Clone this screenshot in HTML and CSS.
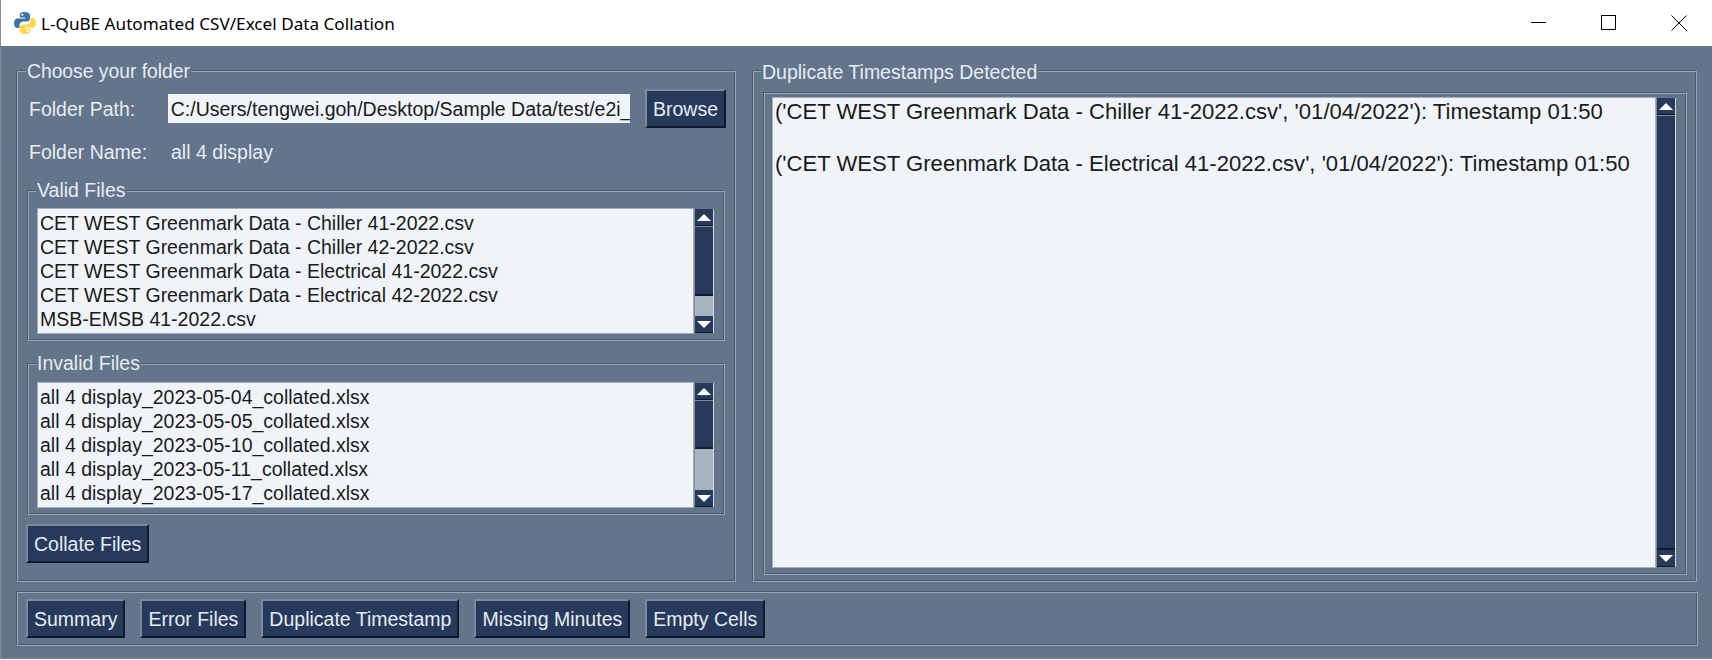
FILE: index.html
```html
<!DOCTYPE html>
<html lang="en">
<head>
  <meta charset="UTF-8" />
  <title>L-QuBE Automated CSV/Excel Data Collation</title>
  <link rel="stylesheet" href="styles.css">
</head>
<body>

  <div class="titlebar">
    <svg class="app-icon" viewBox="0 0 24 24" width="24" height="24">
      <path fill="#3a74a8" d="M11.5 1C7.5 1 6.800 2.600 6.800 4.200V6.500H12V7.500H4.500C2.300 7.500 1 9.300 1 12.200C1 15.200 2.200 17 4.300 17H6.500V14.200C6.500 12 8.200 10.500 10.200 10.500H14.200C15.800 10.500 17 9.200 17 7.600V4.200C17 2.400 15.300 1 11.500 1Z"/>
      <path fill="#ffd84a" d="M12.500 23C16.500 23 17.200 21.400 17.200 19.800V17.500H12V16.500H19.500C21.700 16.500 23 14.700 23 11.800C23 8.800 21.800 7 19.700 7H17.500V9.800C17.500 12 15.800 13.500 13.800 13.500H9.800C8.200 13.500 7 14.800 7 16.400V19.800C7 21.600 8.700 23 12.500 23Z"/>
      <circle cx="9.300" cy="3.800" r="1.100" fill="#fff"/>
      <circle cx="14.700" cy="20.200" r="1.100" fill="#fff"/>
    </svg>
    <span class="app-title">L-QuBE Automated CSV/Excel Data Collation</span>
    <div class="window-controls">
      <svg viewBox="0 0 16 16" width="16" height="16"><path d="M0 7.500H15" stroke="#000" fill="none"/></svg>
      <svg viewBox="0 0 16 16" width="16" height="16"><rect x="0.500" y="0.500" width="14" height="14" stroke="#000" fill="none"/></svg>
      <svg viewBox="0 0 16 16" width="16" height="16"><path d="M0.500 0.500L15.500 15.500M15.500 0.500L0.500 15.500" stroke="#000" fill="none"/></svg>
    </div>
  </div>

  <div class="main">
    <div class="top">
      <section class="group left-group">
        <span class="legend">Choose your folder</span>

        <div class="path-row">
          <span class="field-label">Folder Path:</span>
          <div class="entry">C:/Users/tengwei.goh/Desktop/Sample Data/test/e2i_</div>
          <button class="btn">Browse</button>
        </div>
        <div class="name-row">
          <span class="field-label">Folder Name:</span>
          <span>all 4 display</span>
        </div>

        <section class="group list-group valid">
          <span class="legend">Valid Files</span>
          <div class="list-wrap">
            <div class="listbox">
              <div>CET WEST Greenmark Data - Chiller 41-2022.csv</div>
              <div>CET WEST Greenmark Data - Chiller 42-2022.csv</div>
              <div>CET WEST Greenmark Data - Electrical 41-2022.csv</div>
              <div>CET WEST Greenmark Data - Electrical 42-2022.csv</div>
              <div>MSB-EMSB 41-2022.csv</div>
            </div>
            <div class="scrollbar">
              <div class="arrow up"></div>
              <div class="thumb" style="height: 70px"></div>
              <div class="track"></div>
              <div class="arrow down"></div>
            </div>
          </div>
        </section>

        <section class="group list-group invalid">
          <span class="legend">Invalid Files</span>
          <div class="list-wrap">
            <div class="listbox">
              <div>all 4 display_2023-05-04_collated.xlsx</div>
              <div>all 4 display_2023-05-05_collated.xlsx</div>
              <div>all 4 display_2023-05-10_collated.xlsx</div>
              <div>all 4 display_2023-05-11_collated.xlsx</div>
              <div>all 4 display_2023-05-17_collated.xlsx</div>
            </div>
            <div class="scrollbar">
              <div class="arrow up"></div>
              <div class="thumb" style="height: 49px"></div>
              <div class="track"></div>
              <div class="arrow down"></div>
            </div>
          </div>
        </section>

        <button class="btn collate">Collate Files</button>
      </section>

      <section class="group right-group">
        <span class="legend">Duplicate Timestamps Detected</span>
        <div class="result-frame">
          <div class="result-text">
            <p>('CET WEST Greenmark Data - Chiller 41-2022.csv', '01/04/2022'): Timestamp 01:50</p>
            <p>('CET WEST Greenmark Data - Electrical 41-2022.csv', '01/04/2022'): Timestamp 01:50</p>
          </div>
          <div class="scrollbar">
            <div class="arrow up"></div>
            <div class="thumb fill"></div>
            <div class="arrow down"></div>
          </div>
        </div>
      </section>
    </div>

    <div class="group tabs">
      <button class="btn">Summary</button>
      <button class="btn">Error Files</button>
      <button class="btn">Duplicate Timestamp</button>
      <button class="btn">Missing Minutes</button>
      <button class="btn">Empty Cells</button>
    </div>
  </div>

</body>
</html>
```

FILE: styles.css
```css
html {
  height: 660px;
  overflow: hidden;
  background: #eeeeee;
}
body {
  margin: 0;
  height: 659px;
  box-sizing: border-box;
  overflow: hidden;
  font-family: "Liberation Sans", Arial, sans-serif;
  font-size: 19.500px;
  background-color: #64748b;
  color: #e6ecf3;
  border-left: 1px solid #8a8a8a;
  border-bottom: 1px solid #8a8a8a;
}

.titlebar {
  height: 46px;
  background: #fff;
  display: flex;
  align-items: center;
  color: #000;
}
.app-icon {
  margin-left: 12px;
}
.app-title {
  margin-left: 4px;
  font-family: "Noto Sans", sans-serif;
  font-size: 17.150px;
}
.window-controls {
  margin-left: auto;
  display: flex;
  gap: 54px;
  padding-right: 25px;
}

.main {
  padding: 24px 14px 0 15px;
}
.top {
  display: flex;
  gap: 16px;
}

/* groove frame like a tk labelframe */
.group {
  position: relative;
  box-sizing: border-box;
  border: 1px solid;
  border-color: #4c5a6e #98a5b5 #98a5b5 #4c5a6e;
  box-shadow: inset 1px 1px 0 #98a5b5, inset -1px -1px 0 #4c5a6e;
}
.legend {
  position: absolute;
  top: -10px;
  left: 8px;
  padding: 0 1px;
  line-height: 22px;
  background: #64748b;
}
.left-group > .legend {
  left: 9px;
  font-size: 19.300px;
}
.list-group .legend {
  top: -12px;
  left: 8px;
  font-size: 19.500px;
}

.left-group {
  width: 720px;
  height: 512px;
  padding: 18px 9px 0 10px;
}
.right-group {
  width: 945px;
  height: 512px;
  padding: 21px 9px 6px 10px;
}

.path-row {
  display: flex;
  align-items: center;
  height: 39px;
}
.name-row {
  display: flex;
  align-items: center;
  height: 24px;
  margin-top: 12px;
}
.field-label {
  width: 141px;
  padding: 1px 0 0 2px;
  box-sizing: border-box;
}
.name-row .field-label {
  width: 144px;
}
.entry {
  width: 463px;
  height: 29px;
  box-sizing: border-box;
  margin-right: 15px;
  padding-left: 3px;
  line-height: 31px;
  background: #f0f4f8;
  color: #1a1a1a;
  white-space: nowrap;
  overflow: hidden;
}

.btn {
  height: 39px;
  padding: 1px 6px 0;
  font-family: inherit;
  font-size: 19.500px;
  color: #e6ecf3;
  background: #283a5b;
  border: 2px solid;
  border-color: #7d8a9c #0f1a2c #0f1a2c #7d8a9c;
  white-space: nowrap;
}

.list-group {
  width: 698px;
  height: 151px;
  padding: 18px 0 0 10px;
}
.valid {
  margin-top: 26px;
}
.invalid {
  margin-top: 22px;
  height: 152px;
  padding-top: 19px;
}
.list-wrap {
  display: flex;
  height: 124px;
}
.listbox {
  width: 655px;
  box-sizing: border-box;
  padding: 2px 0 0 2px;
  background: #f0f4f8;
  box-shadow: 0 0 0 1px #a4afbc;
  color: #1a1a1a;
  line-height: 24px;
  overflow: hidden;
}

.scrollbar {
  width: 20px;
  box-sizing: border-box;
  margin-left: 1px;
  display: flex;
  flex-direction: column;
  background: #a8b3c0;
  border: 1px solid;
  border-color: #7d8a9c #d5dce4 #d5dce4 #7d8a9c;
  border-top: 0;
  border-bottom: 0;
}
.arrow {
  height: 16px;
  background: #283a5b;
  border-bottom: 1px solid #0f1a2c;
  display: flex;
  align-items: center;
  justify-content: center;
  flex: none;
}
.arrow::after {
  content: "";
  border-left: 7px solid transparent;
  border-right: 7px solid transparent;
}
.up::after {
  border-bottom: 7px solid #fff;
}
.down::after {
  border-top: 7px solid #fff;
}
.thumb {
  background: #283a5b;
  border-top: 1px solid #7d8a9c;
  border-bottom: 2px solid #0f1a2c;
  box-sizing: border-box;
  flex: none;
}
.thumb.fill {
  flex: 1;
}
.track {
  flex: 1;
}

.collate {
  display: block;
  margin-top: 9px;
  margin-left: -1px;
}

.result-frame {
  display: flex;
  height: 483px;
  box-sizing: border-box;
  padding: 5px 10px 7px 9px;
  border: 1px solid;
  border-color: #4c5a6e #98a5b5 #98a5b5 #4c5a6e;
  box-shadow: inset 1px 1px 0 #98a5b5, inset -1px -1px 0 #4c5a6e;
}
.result-text {
  flex: 1;
  padding: 1px 2px;
  background: #f0f4f8;
  box-shadow: 0 0 0 1px #a4afbc;
  color: #1a1a1a;
  font-size: 22.100px;
  line-height: 26px;
}
.result-text p {
  margin: 0 0 26px;
  white-space: nowrap;
}

.tabs {
  width: 1682px;
  height: 55px;
  margin-top: 9px;
  padding: 7px 9px 0;
  display: flex;
  gap: 15px;
}
```
